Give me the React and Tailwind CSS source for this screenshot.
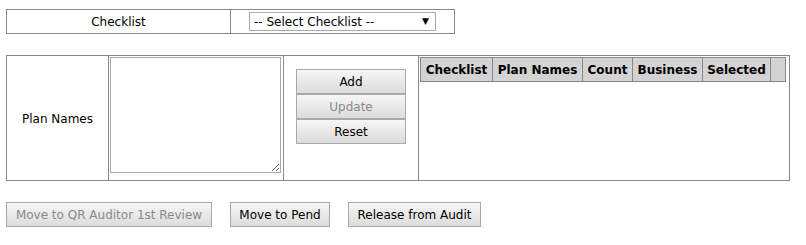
export default function App() {
  const btn =
    "h-[25px] border border-[#a9a9a9] bg-gradient-to-b from-[#f6f6f6] to-[#dcdcdc] text-[12px] leading-none"
  return (
    <div className="min-h-screen bg-white pl-[6px] pt-[9px] text-[12px] text-black [font-family:'DejaVu_Sans',Verdana,sans-serif]">
      {/* checklist row */}
      <div className="flex h-[25px] w-[449px] border border-[#888]">
        <div className="flex w-[224px] items-center justify-center border-r border-[#888]">Checklist</div>
        <div className="flex flex-1 items-center pl-[18px]">
          <div className="flex h-[19px] w-[187px] items-center justify-between border border-[#a9a9a9] pl-[4px] pr-[6px]">
            <span>-- Select Checklist --</span>
            <span className="text-[9px]">▼</span>
          </div>
        </div>
      </div>

      {/* plan names row */}
      <div className="mt-[21px] flex h-[126px] w-[784px] border border-[#888]">
        <div className="flex w-[102px] items-center justify-center border-r border-[#888] pt-[1px]">Plan Names</div>
        <div className="w-[175px] border-r border-[#888] pl-[1px] pt-[1px]">
          <textarea className="h-[116px] w-[171px] resize border border-[#a9a9a9] outline-none" />
        </div>
        <div className="flex w-[135px] flex-col items-center border-r border-[#888] pt-[13px]">
          <button className={`${btn} w-[110px]`}>Add</button>
          <button className={`${btn} w-[110px] text-[#8a8a8a]`} disabled>Update</button>
          <button className={`${btn} w-[110px]`}>Reset</button>
        </div>
        <div className="flex-1 pl-[1px] pt-[1px]">
          <div className="flex h-[25px] w-[366px] border border-[#888] bg-[#d3d3d3] font-bold">
            <div className="flex w-[72px] items-center justify-center border-r border-[#888]">Checklist</div>
            <div className="flex w-[90px] items-center justify-center border-r border-[#888]">Plan Names</div>
            <div className="flex w-[50px] items-center justify-center border-r border-[#888]">Count</div>
            <div className="flex w-[70px] items-center justify-center border-r border-[#888]">Business</div>
            <div className="flex w-[68px] items-center justify-center border-r border-[#888]">Selected</div>
            <div className="flex-1" />
          </div>
        </div>
      </div>

      {/* actions */}
      <div className="mt-[21px] flex gap-[18px]">
        <button className={`${btn} w-[206px] text-[#8a8a8a]`} disabled>Move to QR Auditor 1st Review</button>
        <button className={`${btn} w-[100px]`}>Move to Pend</button>
        <button className={`${btn} w-[133px]`}>Release from Audit</button>
      </div>
    </div>
  )
}
